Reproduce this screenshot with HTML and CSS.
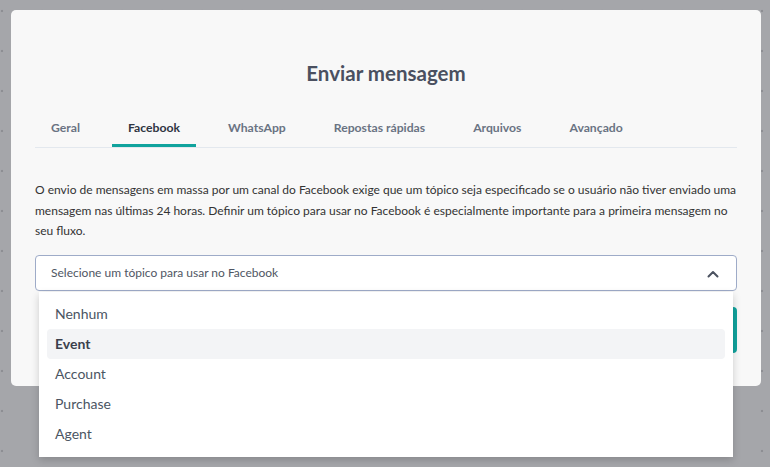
FILE: index.html
```html
<!DOCTYPE html>
<html lang="pt-BR">
<head>
    <meta charset="UTF-8">
    <title>Enviar mensagem</title>
    <link rel="stylesheet" href="styles.css">
</head>
<body>
    <div class="modal">
        <h2 class="modal-title">Enviar mensagem</h2>

        <div class="tabs">
            <div class="tab">Geral</div>
            <div class="tab active">Facebook</div>
            <div class="tab">WhatsApp</div>
            <div class="tab">Repostas rápidas</div>
            <div class="tab">Arquivos</div>
            <div class="tab">Avançado</div>
        </div>

        <p class="info">O envio de mensagens em massa por um canal do Facebook exige que um tópico seja especificado se o usuário não tiver enviado uma mensagem nas últimas 24 horas. Definir um tópico para usar no Facebook é especialmente importante para a primeira mensagem no seu fluxo.</p>

        <div class="select-wrap">
            <div class="select">
                <span class="select-placeholder">Selecione um tópico para usar no Facebook</span>
                <svg class="chevron" width="14" height="14" viewBox="0 0 14 14">
                    <path d="M2.5 9.5 L7 5 L11.5 9.5" fill="none" stroke="#4b5260" stroke-width="2" stroke-linecap="round" stroke-linejoin="round"/>
                </svg>
            </div>
            <ul class="options">
                <li>Nenhum</li>
                <li class="hover">Event</li>
                <li>Account</li>
                <li>Purchase</li>
                <li>Agent</li>
            </ul>
        </div>

        <div class="footer">
            <button class="btn-send">Enviar</button>
        </div>
    </div>
</body>
</html>
```

FILE: styles.css
```css
html, body {
    margin: 0;
    height: 100%;
}
body {
    font-family: Lato, "Liberation Sans", sans-serif;
    background-color: #a5a6aa;
    background-image: radial-gradient(circle, #8d8e93 1.2px, transparent 1.6px);
    background-size: 40px 40px;
    background-position: -18px -9px;
}
.modal {
    width: 702px;
    margin: 10px 0 0 11px;
    padding: 50px 24px 33px;
    background-color: #f8f8f8;
    border-radius: 5px;
}
.modal-title {
    margin: 0;
    text-align: center;
    font-size: 20.5px;
    line-height: 26px;
    font-weight: 700;
    color: #4a5060;
}
.tabs {
    display: flex;
    gap: 16px;
    margin-top: 24px;
    border-bottom: 1px solid #e3e8ee;
}
.tab {
    padding: 10px 16px 8px;
    font-size: 12.2px;
    line-height: 16px;
    font-weight: 700;
    color: #6a7383;
    border-bottom: 3px solid transparent;
}
.tab.active {
    color: #2f3542;
    border-bottom-color: #10a39d;
}
.info {
    margin: 32px 0 0;
    font-size: 12px;
    line-height: 20.5px;
    color: #333;
}
.select-wrap {
    position: relative;
    margin-top: 13px;
}
.select {
    display: flex;
    align-items: center;
    justify-content: space-between;
    height: 34px;
    padding: 0 16px 0 15px;
    background-color: #fff;
    border: 1px solid #9eabc8;
    border-radius: 4px;
}
.select-placeholder {
    font-size: 12px;
    color: #4f5663;
}
.chevron {
    margin-top: 2px;
}
.options {
    position: absolute;
    top: 37px;
    left: 4px;
    right: 4px;
    margin: 0;
    padding: 7px 8px 8px;
    list-style: none;
    background-color: #fff;
    box-shadow: 0 3px 8px rgba(0, 0, 0, 0.18);
    z-index: 2;
}
.options li {
    height: 30px;
    line-height: 30px;
    padding-left: 8px;
    font-size: 14px;
    color: #4b5563;
    border-radius: 4px;
}
.options li.hover {
    background-color: #f3f4f6;
    font-weight: 700;
    color: #3a404c;
}
.footer {
    display: flex;
    justify-content: flex-end;
    margin-top: 16px;
}
.btn-send {
    width: 130px;
    height: 46px;
    border: none;
    border-radius: 4px;
    background-color: #10a39d;
    color: #fff;
    font-family: inherit;
    font-size: 14px;
    font-weight: 700;
}
```
